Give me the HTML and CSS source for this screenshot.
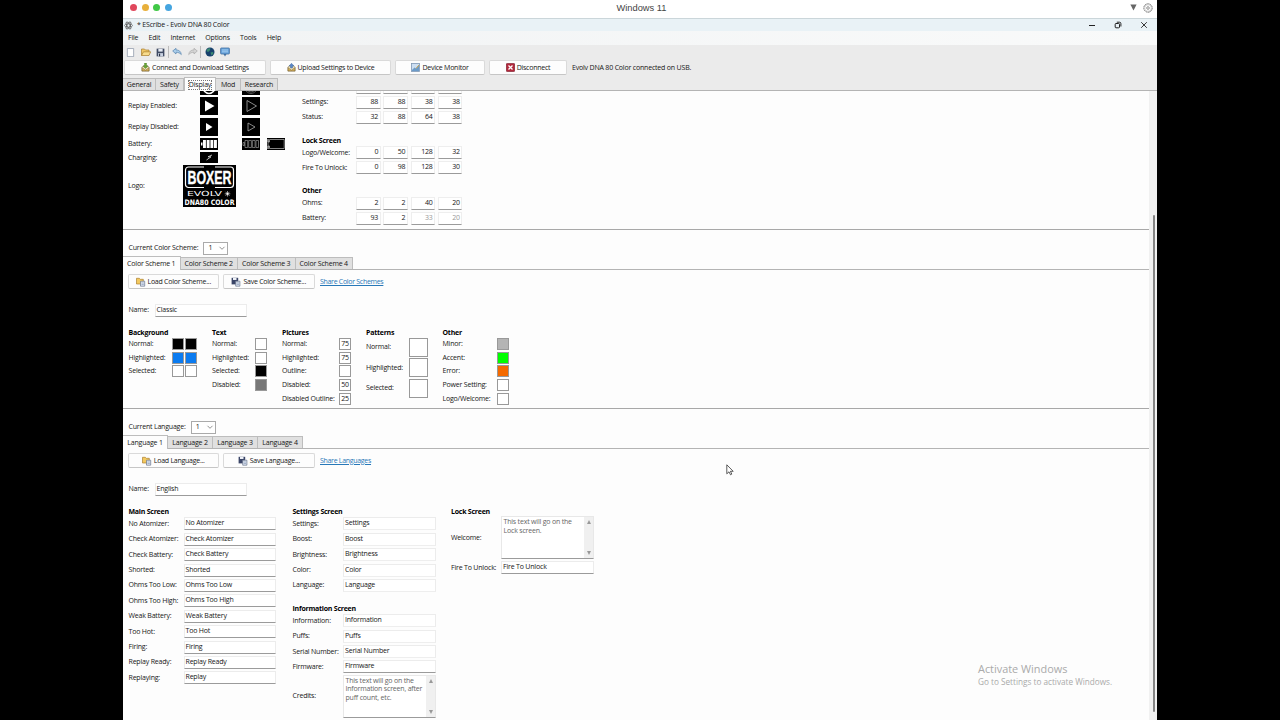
FILE: index.html
```html
<!DOCTYPE html>
<html lang="en">
<head>
<meta charset="utf-8">
<title>EScribe - Evolv DNA 80 Color</title>
<link rel="stylesheet" href="styles.css">
</head>
<body>
<svg class="defs" width="0" height="0">
  <symbol id="tray" viewBox="0 0 10 10"><path d="M1 5h8v4H1z" fill="#d9b45a" stroke="#6f5a30" stroke-width=".8"/><path d="M1 5l1.500-2h5L9 5 5 8z" fill="#efe2b8" stroke="#7d6b48" stroke-width=".6"/></symbol>
  <symbol id="folder" viewBox="0 0 10 10"><path d="M.5 8.500V2h3l1 1H8v2" fill="#f0c766" stroke="#a87c2e" stroke-width=".7"/><path d="M.5 8.500L2.500 4.800h7.200L8 8.500z" fill="#f8dc8d" stroke="#a87c2e" stroke-width=".7"/></symbol>
  <symbol id="floppy" viewBox="0 0 10 10"><path d="M.7.7h8.600v8.600H.7z" fill="#3f4a63"/><path d="M2.600 1h4.800v3H2.600z" fill="#e6ebf3"/><path d="M2.200 5.700h5.600v3.500H2.200z" fill="#c9d2e2"/><path d="M3.200 6.300h1.400v2.900H3.200z" fill="#2c3345"/></symbol>
  <symbol id="load" viewBox="0 0 10 10"><path d="M.5 7V1.300h2.800l1 1h3V7z" fill="#f3c95f" stroke="#ac8030" stroke-width=".7"/><path d="M4.500 4.200h4.200v5H4.500z" fill="#dfe6f2" stroke="#68758c" stroke-width=".7"/><path d="M5.500 6h2.300M5.500 7.500h2.300" stroke="#7f93b4" stroke-width=".6"/></symbol>
  <symbol id="save" viewBox="0 0 10 10"><path d="M.6.8h6.600v6.600H.6z" fill="#3b4668"/><path d="M2 1h3.500v2H2z" fill="#eef1f7"/><path d="M4.700 4.200h4.200v5H4.700z" fill="#dfe6f2" stroke="#68758c" stroke-width=".7"/><path d="M5.700 6H8M5.700 7.500H8" stroke="#7f93b4" stroke-width=".6"/></symbol>
  <symbol id="undo" viewBox="0 0 10 10"><path d="M.7 4L4 1.300v1.600c3 0 5 1.600 5.300 4.700C8 6 6.300 5.300 4 5.300V7z" fill="#a9cdea" stroke="#5583ad" stroke-width=".7"/></symbol>
  <symbol id="chev" viewBox="0 0 8 8"><path d="M1.500 2.800L4 5.300l2.500-2.500" fill="none" stroke="#777" stroke-width=".8"/></symbol>
</svg>
<main class="desktop">
  <header class="viewer-bar">
    <div class="dots"><i class="red"></i><i class="amber"></i><i class="green"></i><i class="blue"></i></div>
    <div class="viewer-title">Windows 11</div>
    <div class="viewer-tools">
      <svg width="7" height="7" viewBox="0 0 7 7"><path d="M.4.4h6.200L3.500 6.600z" fill="#666"/></svg>
      <svg width="10" height="10" viewBox="0 0 10 10"><circle cx="5" cy="5" r="4.200" fill="none" stroke="#777" stroke-width="1" stroke-dasharray="1.800 .5"/><circle cx="5" cy="5" r="3.300" fill="none" stroke="#999" stroke-width=".4"/><circle cx="5" cy="5" r="1.300" fill="none" stroke="#666" stroke-width=".7"/></svg>
    </div>
  </header>

  <div class="titlebar">
    <svg width="9" height="9" viewBox="0 0 10 10" fill="none" stroke="#444" stroke-width=".7"><ellipse cx="5" cy="5" rx="4.500" ry="1.800"/><ellipse cx="5" cy="5" rx="4.500" ry="1.800" transform="rotate(60 5 5)"/><ellipse cx="5" cy="5" rx="4.500" ry="1.800" transform="rotate(120 5 5)"/></svg>
    <span>* EScribe - Evolv DNA 80 Color</span>
    <div class="window-buttons">
      <svg width="8" height="8" viewBox="0 0 8 8"><path d="M1 4.500h6" stroke="#222"/></svg>
      <svg width="8" height="8" viewBox="0 0 8 8" fill="none" stroke="#222" stroke-width="1"><rect x="1.200" y="2.500" width="4.300" height="4.300" rx=".8"/><path d="M2.800 1.200h2.700q1.400 0 1.400 1.400v2.900"/></svg>
      <svg width="8" height="8" viewBox="0 0 8 8"><path d="M1.200 1.200l5.600 5.600M6.800 1.200L1.200 6.800" stroke="#222" stroke-width=".9"/></svg>
    </div>
  </div>

  <nav class="menu"><span>File</span><span>Edit</span><span>Internet</span><span>Options</span><span>Tools</span><span>Help</span></nav>

  <div class="toolbar">
    <svg width="9" height="9" viewBox="0 0 10 10"><path d="M1.500.6h7v9h-7z" fill="#fff" stroke="#8792a5" stroke-width=".8"/></svg>
    <svg width="10" height="10"><use href="#folder"/></svg>
    <svg width="9" height="9"><use href="#floppy"/></svg>
    <i class="sep"></i>
    <svg width="10" height="10"><use href="#undo"/></svg>
    <svg width="10" height="10" class="redo"><use href="#undo"/></svg>
    <i class="sep"></i>
    <svg width="10" height="10" viewBox="0 0 10 10"><circle cx="5" cy="5" r="4.500" fill="#17416d"/><path d="M2 2.500q2-2 3.500-1L4.500 4 3 5 1.500 4zM5.500 5.500L8 5l.5 1.500L6.500 8.500z" fill="#3b8a72"/></svg>
    <svg width="10" height="10" viewBox="0 0 10 10"><rect x=".6" y="1" width="8.800" height="6" rx=".7" fill="#67a3dc" stroke="#416f9f" stroke-width=".8"/><path d="M2 3h6M2 4.800h6" stroke="#bfe0f8" stroke-width=".7"/><path d="M3.500 7h3L5 9.500z" fill="#416f9f"/></svg>
  </div>

  <div class="actions">
    <button class="btn connect"><svg width="9" height="9"><use href="#tray"/><path d="M3.500 0h2v3h1.500L4.500 5.500 2 3h1.500z" fill="#67a535" stroke="#467823" stroke-width=".4"/></svg><span>Connect and Download Settings</span></button>
    <button class="btn upload"><svg width="9" height="9"><use href="#tray"/><path d="M3.500 5h2V3H7L4.500.3 2 3h1.500z" fill="#5b88c7" stroke="#38609a" stroke-width=".4"/></svg><span>Upload Settings to Device</span></button>
    <button class="btn monitor"><svg width="9" height="9" viewBox="0 0 9 9"><rect x=".5" y=".5" width="8" height="8" fill="#cddff2" stroke="#7d96b3" stroke-width=".8"/><path d="M1 7l2.500-2.500L5 5.500 8 2v6H1z" fill="#6b9bc9"/><path d="M5 5.500L8 2" stroke="#c6a04c"/></svg><span>Device Monitor</span></button>
    <button class="btn disconnect"><svg width="9" height="9" viewBox="0 0 9 9"><rect x=".4" y=".4" width="8.200" height="8.200" rx=".8" fill="#b3283c" stroke="#7c1a29" stroke-width=".7"/><path d="M2.500 2.500l4 4M6.500 2.500l-4 4" stroke="#fff" stroke-width="1.300"/></svg><span>Disconnect</span></button>
    <span class="status">Evolv DNA 80 Color connected on USB.</span>
  </div>

  <div class="tabs main-tabs"><span class="t1">General</span><span class="t2">Safety</span><span class="t3 active"><b>Display</b></span><span class="t4">Mod</span><span class="t5">Research</span></div>

  <div class="page">
    <div class="sections">
      <section class="icons-layout">
        <div class="icon-list">
          <div class="icon-row cut"><span></span>
            <svg class="ic" width="18" height="4" viewBox="0 0 18 4"><path d="M0 0h18v4H0z"/><path d="M4 0q5 5 10 0" fill="none" stroke="#fff" stroke-width="1.600"/></svg>
            <svg class="ic" width="18" height="4" viewBox="0 0 18 4"><path d="M0 0h18v4H0z"/><path d="M4 0q5 5 10 0M6 0q3 2 6 0" fill="none" stroke="#888" stroke-width=".6"/></svg></div>
          <div class="icon-row"><span>Replay Enabled:</span>
            <svg class="ic" width="18" height="18" viewBox="0 0 18 18"><path d="M0 0h18v18H0z"/><path d="M5 3.500v11L14.500 9z" fill="#fff"/></svg>
            <svg class="ic" width="18" height="18" viewBox="0 0 18 18"><path d="M0 0h18v18H0z"/><path d="M5 3.500v11L14.500 9z" fill="none" stroke="#aaa" stroke-width=".8"/></svg></div>
          <div class="icon-row"><span>Replay Disabled:</span>
            <svg class="ic" width="18" height="18" viewBox="0 0 18 18"><path d="M0 0h18v18H0z"/><path d="M6 5v8l6.500-4z" fill="#fff"/></svg>
            <svg class="ic" width="18" height="18" viewBox="0 0 18 18"><path d="M0 0h18v18H0z"/><path d="M6 5v8l7-4z" fill="none" stroke="#aaa" stroke-width=".8"/></svg></div>
          <div class="icon-row"><span>Battery:</span>
            <svg class="ic" width="18" height="12" viewBox="0 0 18 12"><path d="M0 0h18v12H0z"/><path d="M3 2h2.900v8H3zM6.700 2h2.900v8H6.700zM10.400 2h2.900v8h-2.900zM14 2h2.900v8H14zM1 4.500h1.500v3H1z" fill="#fff"/></svg>
            <svg class="ic" width="18" height="12" viewBox="0 0 18 12"><path d="M0 0h18v12H0z"/><path d="M3 2.500h2.700v7H3zM6.700 2.500h2.700v7H6.700zM10.400 2.500h2.700v7h-2.700zM14 2.500h2.500v7H14zM1 4.500h1.500v3H1z" fill="none" stroke="#aaa" stroke-width=".6"/></svg>
            <svg class="ic" width="18" height="12" viewBox="0 0 18 12"><path d="M0 0h18v12H0z"/><path d="M2.500 1.500h14.700v9H2.500V8H1V4h1.500z" fill="none" stroke="#bbb" stroke-width=".7"/><path d="M1 1v3M1 8v3" stroke="#fff"/></svg></div>
          <div class="icon-row"><span>Charging:</span>
            <svg class="ic" width="18" height="11" viewBox="0 0 18 11"><path d="M0 0h18v11H0z"/><path d="M12 3L8 4.800h3L6.500 8" fill="none" stroke="#ccc" stroke-width=".9"/></svg></div>
          <div class="icon-row logo-row"><span>Logo:</span>
            <svg class="logo" width="53" height="42" viewBox="0 0 53 42"><path d="M0 0h53v42H0z"/><rect x="2.500" y="2" width="48" height="20.500" rx="3" fill="none" stroke="#fff" stroke-width="1.200"/><path d="M21 2h11M21 22.500h11" stroke="#000" stroke-width="2"/><text x="4.500" y="18.800" textLength="44" lengthAdjust="spacingAndGlyphs" class="boxer">BOXER</text><text x="4" y="31.200" textLength="35" lengthAdjust="spacingAndGlyphs" class="evolv">EVOLV</text><path d="M44.500 26v5.600M41.700 28.800h5.600M42.500 26.800l4 4M46.500 26.800l-4 4" stroke="#eee" stroke-width=".6"/><circle cx="44.500" cy="28.800" r="1" fill="#fff"/><text x="1.500" y="40" textLength="50" lengthAdjust="spacingAndGlyphs" class="dna">DNA80 COLOR</text></svg></div>
        </div>
        <div class="positions">
          <div class="pos stub"><span></span><i></i><i></i><i></i><i></i></div>
          <div class="pos"><span>Settings:</span><i>88</i><i>88</i><i>38</i><i>38</i></div>
          <div class="pos"><span>Status:</span><i>32</i><i>88</i><i>64</i><i>38</i></div>
          <h3>Lock Screen</h3>
          <div class="pos"><span>Logo/Welcome:</span><i>0</i><i>50</i><i>128</i><i>32</i></div>
          <div class="pos"><span>Fire To Unlock:</span><i>0</i><i>98</i><i>128</i><i>30</i></div>
          <h3>Other</h3>
          <div class="pos"><span>Ohms:</span><i>2</i><i>2</i><i>40</i><i>20</i></div>
          <div class="pos"><span>Battery:</span><i>93</i><i>2</i><i class="off">33</i><i class="off">20</i></div>
        </div>
      </section>

      <section class="scheme">
        <div class="current"><span>Current Color Scheme:</span><div class="combo"><span>1</span><svg width="8" height="8"><use href="#chev"/></svg></div></div>
        <div class="tabs scheme-tabs"><span class="active">Color Scheme 1</span><span>Color Scheme 2</span><span>Color Scheme 3</span><span>Color Scheme 4</span></div>
        <div class="files"><button class="btn"><svg width="10" height="10"><use href="#load"/></svg><span>Load Color Scheme...</span></button><button class="btn"><svg width="10" height="10"><use href="#save"/></svg><span>Save Color Scheme...</span></button><a class="share-scheme">Share Color Schemes</a></div>
        <div class="name"><span>Name:</span><i class="input">Classic</i></div>
        <div class="colors">
          <div class="group g-bg"><h3>Background</h3>
            <div class="sw-row"><span>Normal:</span><i class="sw black"></i><i class="sw black"></i></div>
            <div class="sw-row"><span>Highlighted:</span><i class="sw azure"></i><i class="sw azure"></i></div>
            <div class="sw-row"><span>Selected:</span><i class="sw"></i><i class="sw"></i></div></div>
          <div class="group g-text"><h3>Text</h3>
            <div class="sw-row"><span>Normal:</span><i class="sw"></i></div>
            <div class="sw-row"><span>Highlighted:</span><i class="sw"></i></div>
            <div class="sw-row"><span>Selected:</span><i class="sw black"></i></div>
            <div class="sw-row"><span>Disabled:</span><i class="sw gray"></i></div></div>
          <div class="group g-pic"><h3>Pictures</h3>
            <div class="sw-row"><span>Normal:</span><i class="sw">75</i></div>
            <div class="sw-row"><span>Highlighted:</span><i class="sw">75</i></div>
            <div class="sw-row"><span>Outline:</span><i class="sw"></i></div>
            <div class="sw-row"><span>Disabled:</span><i class="sw">50</i></div>
            <div class="sw-row"><span>Disabled Outline:</span><i class="sw">25</i></div></div>
          <div class="group g-pat"><h3>Patterns</h3>
            <div class="sw-row"><span>Normal:</span><i class="sw"></i></div>
            <div class="sw-row"><span>Highlighted:</span><i class="sw"></i></div>
            <div class="sw-row"><span>Selected:</span><i class="sw"></i></div></div>
          <div class="group g-other"><h3>Other</h3>
            <div class="sw-row"><span>Minor:</span><i class="sw silver"></i></div>
            <div class="sw-row"><span>Accent:</span><i class="sw lime"></i></div>
            <div class="sw-row"><span>Error:</span><i class="sw orange"></i></div>
            <div class="sw-row"><span>Power Setting:</span><i class="sw"></i></div>
            <div class="sw-row"><span>Logo/Welcome:</span><i class="sw"></i></div></div>
        </div>
      </section>

      <section class="language">
        <div class="current"><span>Current Language:</span><div class="combo"><span>1</span><svg width="8" height="8"><use href="#chev"/></svg></div></div>
        <div class="tabs lang-tabs"><span class="active">Language 1</span><span>Language 2</span><span>Language 3</span><span>Language 4</span></div>
        <div class="files"><button class="btn"><svg width="10" height="10"><use href="#load"/></svg><span>Load Language...</span></button><button class="btn"><svg width="10" height="10"><use href="#save"/></svg><span>Save Language...</span></button><a class="share-lang">Share Languages</a></div>
        <div class="name"><span>Name:</span><i class="input">English</i></div>
        <div class="screens">
          <div class="screen s-main"><h3>Main Screen</h3>
            <div class="field"><span>No Atomizer:</span><i class="input">No Atomizer</i></div>
            <div class="field"><span>Check Atomizer:</span><i class="input">Check Atomizer</i></div>
            <div class="field"><span>Check Battery:</span><i class="input">Check Battery</i></div>
            <div class="field"><span>Shorted:</span><i class="input">Shorted</i></div>
            <div class="field"><span>Ohms Too Low:</span><i class="input">Ohms Too Low</i></div>
            <div class="field"><span>Ohms Too High:</span><i class="input">Ohms Too High</i></div>
            <div class="field"><span>Weak Battery:</span><i class="input">Weak Battery</i></div>
            <div class="field"><span>Too Hot:</span><i class="input">Too Hot</i></div>
            <div class="field"><span>Firing:</span><i class="input">Firing</i></div>
            <div class="field"><span>Replay Ready:</span><i class="input">Replay Ready</i></div>
            <div class="field"><span>Replaying:</span><i class="input">Replay</i></div></div>
          <div class="screen s-set"><h3>Settings Screen</h3>
            <div class="field"><span>Settings:</span><i class="input faint">Settings</i></div>
            <div class="field"><span>Boost:</span><i class="input faint">Boost</i></div>
            <div class="field"><span>Brightness:</span><i class="input faint">Brightness</i></div>
            <div class="field"><span>Color:</span><i class="input faint">Color</i></div>
            <div class="field"><span>Language:</span><i class="input faint">Language</i></div>
            <h3 class="info">Information Screen</h3>
            <div class="field"><span>Information:</span><i class="input faint">Information</i></div>
            <div class="field"><span>Puffs:</span><i class="input faint">Puffs</i></div>
            <div class="field"><span>Serial Number:</span><i class="input faint">Serial Number</i></div>
            <div class="field"><span>Firmware:</span><i class="input">Firmware</i></div>
            <div class="field tall"><span>Credits:</span><div class="area"><p>This text will go on the<br>Information screen, after<br>puff count, etc.</p><div class="mini-scroll"><b class="up"></b><b class="down"></b></div></div></div></div>
          <div class="screen s-lock"><h3>Lock Screen</h3>
            <div class="field tall"><span>Welcome:</span><div class="area"><p>This text will go on the<br>Lock screen.</p><div class="mini-scroll"><b class="up"></b><b class="down"></b></div></div></div>
            <div class="field fire"><span>Fire To Unlock:</span><i class="input">Fire To Unlock</i></div></div>
        </div>
      </section>
    </div>
    <div class="scrollbar"><div class="thumb"></div></div>
  </div>
  <aside class="watermark"><div class="wm1">Activate Windows</div><div class="wm2">Go to Settings to activate Windows.</div></aside>
  <svg class="pointer" width="8" height="12" viewBox="0 0 8 12"><path d="M.8.8v9l2.200-2 1.500 3 1.300-.7-1.400-2.800h2.800z" fill="#fff" stroke="#333" stroke-width=".8"/></svg>
</main>
</body>
</html>
```
FILE: styles.css
```css
* { box-sizing: border-box; }
body { margin: 0; background: #000; font: 7px/10px "Open Sans", "Noto Sans", sans-serif; color: #161616; letter-spacing: -0.19px; }
svg { display: block; flex: none; }
i { font-style: normal; }
span { white-space: nowrap; }
h3 { margin: 0 0 -0.8px; font-size: 7px; line-height: 10px; font-weight: 700; color: #000; white-space: nowrap; letter-spacing: -0.24px; }
.defs { position: absolute; }
.desktop { position: relative; width: 1034px; height: 720px; margin: 0 auto 0 123px; background: #fdfdfd; overflow: hidden; display: flex; flex-direction: column; }

.viewer-bar { height: 18px; flex: none; background: #fff; display: grid; grid-template-columns: 1fr auto 1fr; align-items: center; padding: 0 4px 3px 7px; }
.dots { display: flex; gap: 4.4px; }
.dots i { width: 7.200px; height: 7.200px; border-radius: 50%; }
.red { background: #e0475c; }
.amber { background: #e8b03b; }
.green { background: #40c846; }
.blue { background: #45a5e0; }
.viewer-title { font: 9.300px/12px "Liberation Sans", sans-serif; letter-spacing: 0; color: #444; }
.viewer-tools { display: flex; justify-content: flex-end; align-items: center; gap: 6px; }

.titlebar { height: 13px; flex: none; background: #e9f2f6; border-top: 1px solid #cbd6da; display: flex; align-items: center; padding: 0 9px 0 1px; gap: 4px; }
.window-buttons { margin-left: auto; display: flex; gap: 18px; }
.menu { height: 14px; flex: none; background: linear-gradient(90deg, #f1f3f4, #f9fafa); display: flex; align-items: center; padding-left: 5px; gap: 10.200px; }
.toolbar { height: 14px; flex: none; background: #ebebeb; display: flex; align-items: center; padding-left: 3px; gap: 5.500px; }
.toolbar .sep { width: 1px; height: 12px; background: #bbb; margin: 0 -2px 0 -3px; }
.redo { transform: scaleX(-1); filter: grayscale(1); opacity: .6; }
.actions { height: 18px; flex: none; background: #ebebeb; display: flex; align-items: flex-start; padding: 1px 0 0 1px; gap: 4px; }
.btn { height: 15px; margin: 0; padding: 0; border: 1px solid #dadada; border-bottom-color: #c6c6c6; border-radius: 2px; background: #fdfdfd; font: inherit; color: inherit; letter-spacing: -0.25px; display: flex; align-items: center; justify-content: center; gap: 2px; }
.connect { width: 142px; }
.upload { width: 121px; }
.monitor { width: 90px; }
.disconnect { width: 78px; }
.status { padding: 3px 0 0 1px; }

.tabs { display: flex; align-items: flex-end; border-bottom: 1px solid #b4b4b4; flex: none; }
.tabs > span { height: 12px; border: 1px solid #bdbdbd; border-bottom: 0; border-left-width: 0; background: #e0e0e0; display: flex; align-items: center; justify-content: center; }
.tabs > .active { height: 14px; margin-bottom: -1px; background: #fdfdfd; border-left-width: 1px; }
.tabs b { font-weight: 400; outline: 1px dotted #777; line-height: 8px; }
.main-tabs { height: 14px; background: #ebebeb; }
.t1 { width: 33px; }
.t2 { width: 28px; }
.t3 { width: 32px; }
.t4 { width: 25px; }
.t5 { width: 37px; }

.page { flex: 1; min-height: 0; display: flex; }
.sections { width: 1026px; }
.scrollbar { width: 8px; padding: 124px 0 0 3.500px; background: #f1f1f1; }
.thumb { width: 2px; height: 497px; background: #858585; border-radius: 1px; }

.icons-layout { height: 138px; border-bottom: 1px solid #a8a8a8; display: flex; padding-left: 5px; box-sizing: content-box; }
.icon-list { width: 174px; display: flex; flex-direction: column; gap: 2.400px; }
.icon-list > :nth-child(4) { margin-top: -0.5px; }
.icon-row { display: flex; align-items: center; }
.icon-row > span { width: 72px; }
.icon-row .ic + .ic { margin-left: 24.300px; }
.icon-row .ic + .ic + .ic { margin-left: 7px; }
.cut { height: 4px; }
.icon-row.logo-row > span { width: 55px; }
.logo { overflow: visible; letter-spacing: 0; }
.boxer { font: 700 18px "Liberation Sans", sans-serif; fill: #fff; stroke: #fff; stroke-width: .4px; }
.evolv { font: 400 7px "DejaVu Sans", sans-serif; fill: #fff; }
.dna { font: 700 7.500px "DejaVu Sans", sans-serif; fill: #fff; }
.positions { width: 170px; }
.pos { height: 15.300px; display: grid; grid-template-columns: 51.500px repeat(4, 24.500px); column-gap: 2.700px; align-items: center; width: 164px; }
.pos i { height: 13px; line-height: 10px; text-align: right; padding-right: 1.500px; border: 1px solid #eee; border-bottom-color: #9b9b9b; background: #fff; }
.pos.stub { height: 3.500px; align-items: start; }
.pos.stub i { height: 3px; border-top: 0; }
.positions h3 { margin-top: 10.700px; height: 10px; }
.pos .off { color: #999; }

.current { display: flex; align-items: center; gap: 5px; padding-left: 5.500px; height: 14px; }
.combo { width: 25px; height: 13px; border: 1px solid #aaa; background: #fff; display: flex; align-items: center; justify-content: space-between; padding: 0 1px 0 4px; }
.scheme { height: 179px; border-bottom: 1px solid #a8a8a8; padding-top: 11px; }
.scheme-tabs, .lang-tabs { height: 14px; margin-top: 1px; }
.scheme-tabs > span { width: 57.500px; }
.lang-tabs > span { width: 45px; }
.tabs > span:first-child { border-left: 0; }
.files { display: flex; align-items: center; padding-left: 4.500px; gap: 4px; margin-top: 4px; }
.files .btn { width: 91.500px; }
.files a { color: #2878b8; text-decoration: underline; margin-left: 1.500px; letter-spacing: -0.3px; }
.name { display: flex; align-items: center; padding-left: 5.500px; margin-top: 14px; height: 14px; }
.name span { width: 26px; }
.input { display: block; width: 92.500px; height: 13px; line-height: 10px; padding-left: 1px; border: 1px solid #ececec; border-bottom-color: #9b9b9b; background: #fff; white-space: nowrap; }
.input.faint { border-bottom-color: #eee; }
.colors { display: flex; padding-left: 5.500px; margin-top: 11px; }
.sw-row { height: 13.650px; display: flex; align-items: center; }
.sw { width: 12px; height: 12px; border: 1px solid #999; background: #fff; text-align: center; line-height: 10px; margin-right: 1.500px; flex: none; }
.g-bg { width: 83.500px; }
.g-bg .sw-row > span { width: 43px; }
.g-text { width: 70px; }
.g-text .sw-row > span { width: 43px; }
.g-pic { width: 84px; }
.g-pic .sw-row > span { width: 57px; }
.g-pat { width: 76.500px; }
.g-pat .sw-row { height: 20.500px; }
.g-pat .sw-row > span { width: 43px; }
.g-pat .sw { width: 19px; height: 19px; }
.g-other .sw-row > span { width: 54px; }
.sw.black { background: #000; }
.sw.azure { background: #0b7bf0; }
.sw.gray { background: #777; }
.sw.silver { background: #b4b4b4; }
.sw.lime { background: #0f0; }
.sw.orange { background: #f56a00; }

.language { padding-top: 11px; }
.screens { display: flex; padding-left: 5.500px; margin-top: 11px; }
.field { height: 15.400px; display: flex; align-items: center; }
.s-main { width: 164px; }
.s-main .field > span { width: 55px; }
.s-set { width: 158.500px; }
.s-set .field > span { width: 50.500px; }
.s-lock .field > span { width: 50px; }
h3.info { margin-top: 10.700px; }
.field.tall { height: 43px; }
.area { width: 93px; height: 43px; border: 1px solid #e8e8e8; border-bottom: 1.500px solid #9b9b9b; display: flex; justify-content: space-between; background: #fff; }
.area p { margin: 1px 0 0 1.500px; line-height: 8.500px; color: #666; white-space: nowrap; }
.mini-scroll { width: 9px; flex: none; background: #f0f0f0; display: flex; flex-direction: column; justify-content: space-between; align-items: center; padding: 3px 0; }
.mini-scroll b { border: 2.500px solid transparent; }
.mini-scroll .up { border-top: 0; border-bottom: 4px solid #999; }
.mini-scroll .down { border-bottom: 0; border-top: 4px solid #999; }
.fire { margin-top: 1px; }

.watermark { position: absolute; left: 855px; top: 662px; color: #aaa; letter-spacing: 0; }
.wm1 { font-size: 10.900px; line-height: 14px; }
.wm2 { font-size: 8.200px; line-height: 11px; }
.pointer { position: absolute; left: 603px; top: 464px; }
```
